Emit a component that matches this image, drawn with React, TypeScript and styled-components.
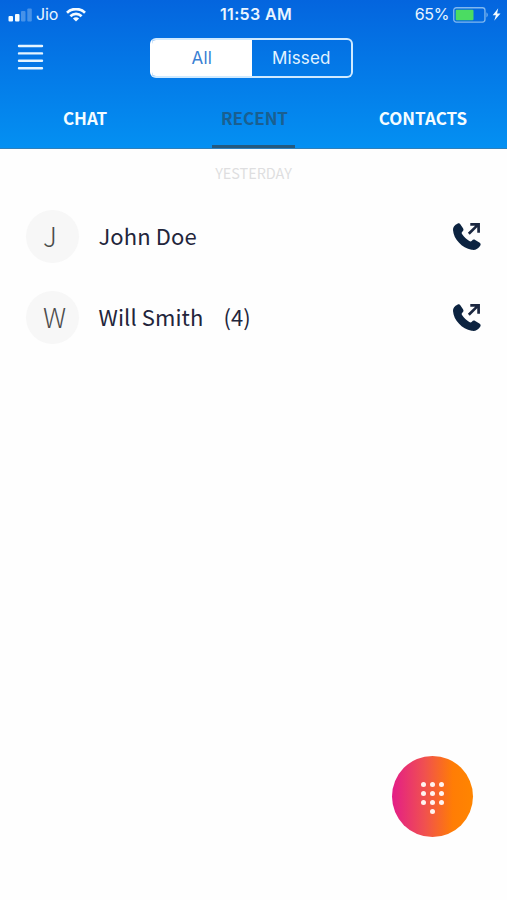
import React from 'react';
import styled, { createGlobalStyle } from 'styled-components';

const GlobalStyle = createGlobalStyle`
  * { box-sizing: border-box; }
  body { margin: 0; background: #fefefe; }
  button { border: 0; padding: 0; background: none; font: inherit; color: inherit; }
`;

const Screen = styled.div`
  display: flex;
  flex-direction: column;
  width: 507px;
  height: 900px;
  background: #fefefe;
  font-family: 'Noto Sans CJK SC', 'Noto Sans', sans-serif;
`;

const Header = styled.header`
  display: flex;
  flex-direction: column;
  flex: none;
  height: 149px;
  color: #fff;
  background: linear-gradient(#0465de, #0490f2);
  border-bottom: 1px solid #2f7fba;
`;

const StatusBar = styled.div`
  display: grid;
  grid-template-columns: 1fr auto 1fr;
  align-items: center;
  height: 29px;
  padding: 0 6px 0 8px;
  font: 400 16px/29px Inter, sans-serif;
  color: #e9f5ff;
`;

const Carrier = styled.div`
  display: flex;
  align-items: center;
`;

const CarrierName = styled.span`
  margin: 0 8px 0 4px;
  letter-spacing: -0.1px;
`;

const Clock = styled.span`
  padding-left: 3px;
  font-weight: 600;
  font-size: 16px;
  letter-spacing: 0.35px;
`;

const Power = styled.div`
  display: flex;
  align-items: center;
  justify-content: flex-end;
`;

const Percent = styled.span`
  margin-right: 4px;
  letter-spacing: -0.4px;
`;

const Toolbar = styled.div`
  display: grid;
  grid-template-columns: 133px 203px;
  align-items: center;
  height: 58px;
  padding-left: 17px;
`;

const MenuButton = styled.button`
  display: flex;
  width: 27px;
  padding-bottom: 3px;
`;

const Segments = styled.div`
  display: grid;
  grid-template-columns: 1fr 1fr;
  height: 40px;
  border: 2px solid #d0eaff;
  border-left-color: #fff;
  border-radius: 6px;
  overflow: hidden;
`;

const Segment = styled.button<{ $on?: boolean }>`
  font: 400 17px/36px Inter, sans-serif;
  letter-spacing: 0.15px;
  color: ${(p) => (p.$on ? '#397fd3' : '#e2f3ff')};
  background: ${(p) => (p.$on ? '#fff' : 'transparent')};
`;

const Tabs = styled.nav`
  display: grid;
  grid-template-columns: repeat(3, 1fr);
  justify-items: center;
  flex: 1;
`;

const Tab = styled.button<{ $active?: boolean }>`
  width: ${(p) => (p.$active ? '83px' : 'auto')};
  height: 61px;
  padding: 3px 0 0 ${(p) => (p.$active ? '2px' : '1px')};
  border-bottom: 3px solid ${(p) => (p.$active ? '#23597f' : 'transparent')};
  font-size: 17px;
  font-weight: 700;
  line-height: 56px;
  white-space: nowrap;
  letter-spacing: 0;
  color: ${(p) => (p.$active ? '#1a5f90' : '#f4fcff')};
`;

const DateLabel = styled.div`
  height: 47px;
  text-align: center;
  font-size: 14.5px;
  line-height: 47px;
  letter-spacing: -0.05px;
  color: #dedee0;
`;

const CallList = styled.ul`
  margin: 0;
  padding: 0;
  list-style: none;
`;

const CallRow = styled.li`
  display: flex;
  align-items: center;
  height: 81px;
  padding: 0 25px 0 26px;
`;

const Avatar = styled.div<{ $shift: number }>`
  width: 53px;
  height: 53px;
  border-radius: 50%;
  background: #f7f7f7;
  color: #4c4c4c;
  font-size: 27px;
  font-weight: 300;
  line-height: 52px;
  text-align: center;
  text-indent: ${(p) => p.$shift}px;
`;

const Name = styled.span`
  margin: -3px 0 0 19.5px;
  font-size: 22px;
  line-height: 32px;
  letter-spacing: 0.1px;
  color: #23253b;
`;

const Count = styled(Name)`
  margin-left: 20px;
`;

const CallIcon = styled.svg`
  margin-left: auto;
`;

const DialButton = styled.button`
  display: flex;
  align-items: center;
  justify-content: center;
  width: 81px;
  height: 81px;
  margin: auto 34px 63px auto;
  border-radius: 50%;
  padding-top: 2px;
  background: linear-gradient(90deg, #e31d88, #f05050 40%, #ff7d05 75%, #ff8500);
`;

const SignalIcon = () => (
  <svg width="24" height="14" viewBox="0 0 24 14" fill="#f4fbff">
    <rect x=".5" y="8" width="4.5" height="5.5" rx="1" />
    <rect x="7" y="6" width="4.5" height="7.5" rx="1" />
    <rect x="13" y="3" width="4.5" height="10.5" rx="1" opacity=".28" />
    <rect x="19.3" y="0.5" width="4.5" height="13" rx="1" opacity=".28" />
  </svg>
);

const WifiIcon = () => (
  <svg width="20" height="14" viewBox="0 0 20 14" fill="none" stroke="#f4fbff" strokeWidth="2.7">
    <path d="M1 4.7C6-.2 14-.2 19 4.7" />
    <path d="M4.4 8.2c3.2-3 8-3 11.2 0" />
    <path d="M6.9 10.4c1.8-1.6 4.4-1.6 6.2 0L10 13.4Z" fill="#f4fbff" stroke="none" />
  </svg>
);

const BatteryIcon = () => (
  <svg width="37" height="16" viewBox="0 0 37 16">
    <rect x=".75" y=".75" width="31.2" height="14.3" rx="2.5" fill="none" stroke="#80b8ef" strokeWidth="1.3" />
    <rect x="2.7" y="2.7" width="17.8" height="10.6" rx="1" fill="#4bdc62" />
    <path d="M33.5 5.2q2.5 2.7 0 5.4Z" fill="#80b8ef" />
  </svg>
);

const BoltIcon = () => (
  <svg width="11" height="13" viewBox="0 0 11 13" fill="#f4fbff">
    <path d="M8.2.3 2.7 7.3h3.2L4.2 12.7l6.3-7.2H7.1Z" />
  </svg>
);

const MenuIcon = () => (
  <svg width="27" height="28" viewBox="0 0 27 28" stroke="#e6f5ff" strokeWidth="2.4" strokeLinecap="round">
    <path d="M2 3h23M2 10.4h23M2 17.8h23M2 25.2h23" />
  </svg>
);

const OutgoingCallIcon = () => (
  <CallIcon width="30" height="30" viewBox="0 0 30 30">
    <path
      d="M5.4 1.7C6.6 1 7.7 1.3 8.5 2.5l2.5 3.8c.8 1.3.6 2.4-.5 3.3-1 .9-1.1 1.6-.3 2.7 1.9 2.7 4.2 4.9 7.1 6.8 1.1.7 1.8.5 2.6-.4 1-1.2 2-1.4 3.3-.7l4.2 2.6c1.4.9 1.6 2 .8 3.2-2 3.1-5 4.7-8.6 4C10 25.9 1.5 16.9 1 7.9c-.2-2.8 1.8-4.9 4.4-6.2Z"
      fill="#0c2340"
    />
    <path d="m16.8 11.7 9-8.8M18.3 2.4h8.3v8.3" fill="none" stroke="#1b2740" strokeWidth="2.7" />
  </CallIcon>
);

const dialDots = [
  [2.5, 2.5], [11.5, 2.5], [20.5, 2.5],
  [2.5, 11.5], [11.5, 11.5], [20.5, 11.5],
  [2.5, 20.5], [11.5, 20.5], [20.5, 20.5],
  [11.5, 29.5],
];

const DialpadIcon = () => (
  <svg width="23" height="32" viewBox="0 0 23 32" fill="#fff4f0">
    {dialDots.map(([x, y]) => <circle key={`${x}-${y}`} cx={x} cy={y} r="2.5" />)}
  </svg>
);

const calls = [
  { name: 'John Doe', initial: 'J', count: '', shift: -5 },
  { name: 'Will Smith', initial: 'W', count: '(4)', shift: 4 },
];

export default function App() {
  return (
    <Screen>
      <GlobalStyle />
      <Header>
        <StatusBar>
          <Carrier>
            <SignalIcon />
            <CarrierName>Jio</CarrierName>
            <WifiIcon />
          </Carrier>
          <Clock>11:53 AM</Clock>
          <Power>
            <Percent>65%</Percent>
            <BatteryIcon />
            <BoltIcon />
          </Power>
        </StatusBar>
        <Toolbar>
          <MenuButton aria-label="Menu"><MenuIcon /></MenuButton>
          <Segments>
            <Segment $on>All</Segment>
            <Segment>Missed</Segment>
          </Segments>
        </Toolbar>
        <Tabs>
          <Tab>CHAT</Tab>
          <Tab $active>RECENT</Tab>
          <Tab>CONTACTS</Tab>
        </Tabs>
      </Header>
      <DateLabel>YESTERDAY</DateLabel>
      <CallList>
        {calls.map((call) => (
          <CallRow key={call.name}>
            <Avatar $shift={call.shift}>{call.initial}</Avatar>
            <Name>{call.name}</Name>
            {call.count && <Count>{call.count}</Count>}
            <OutgoingCallIcon />
          </CallRow>
        ))}
      </CallList>
      <DialButton aria-label="Dial pad"><DialpadIcon /></DialButton>
    </Screen>
  );
}
